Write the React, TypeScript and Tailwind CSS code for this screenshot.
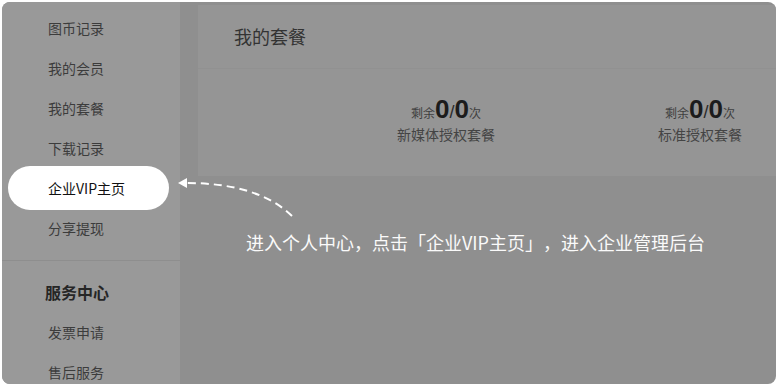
import React from "react";

const font = { fontFamily: '"Noto Sans CJK SC", "Noto Sans", sans-serif' };

function SideItem({ label, active }: { label: string; active?: boolean }) {
  if (active) {
    return (
      <div className="ml-[6px] my-[-2px] flex h-[44px] w-[161px] shrink-0 items-center rounded-full bg-white pl-[40px] text-[14px] text-[#111]">
        {label}
      </div>
    );
  }
  return (
    <div className="flex h-[40px] shrink-0 items-center pl-[46px] text-[14px] text-[#3c3c3c]">{label}</div>
  );
}

function Stat({ name }: { name: string }) {
  const num = { fontFamily: '"Liberation Sans", Arial, sans-serif' };
  return (
    <div className="flex w-[254px] flex-col items-center">
      <div className="flex h-[26px] items-baseline leading-none">
        <span className="text-[12px] text-[#3f3f3f]">剩余</span>
        <span className="text-[26px] font-bold text-[#1c1c1c]" style={num}>0</span>
        <span className="text-[18px] text-[#2a2a2a]" style={num}>/</span>
        <span className="text-[26px] font-bold text-[#1c1c1c]" style={num}>0</span>
        <span className="text-[12px] text-[#3f3f3f]">次</span>
      </div>
      <div className="mt-[2px] text-[14px] leading-[20px] text-[#444]">{name}</div>
    </div>
  );
}

export default function App() {
  return (
    <div className="h-[386px] w-[776px] overflow-hidden bg-white pl-[2px] pt-[2px]" style={font}>
      <div className="relative flex h-[382px] w-[774px] overflow-hidden rounded-[8px] bg-[#8f8f8f]">
        {/* Sidebar */}
        <div className="flex w-[178px] shrink-0 flex-col bg-[#999999] pt-[6px]">
          <SideItem label="图币记录" />
          <SideItem label="我的会员" />
          <SideItem label="我的套餐" />
          <SideItem label="下载记录" />
          <SideItem label="企业VIP主页" active />
          <SideItem label="分享提现" />
          <div className="mt-[12px] h-px shrink-0 bg-[#8e8e8e]" />
          <div className="mt-[11px] flex h-[40px] shrink-0 items-center pl-[43px] text-[16px] font-bold text-[#262626]">
            服务中心
          </div>
          <SideItem label="发票申请" />
          <SideItem label="售后服务" />
        </div>

        {/* Main */}
        <div className="flex min-w-0 flex-1 flex-col pl-[18px] pt-[3px]">
          <div className="h-[171px] w-[700px] shrink-0 bg-[#959595]">
            <div className="flex h-[63px] items-center pl-[36px] text-[18px] text-[#333]">我的套餐</div>
            <div className="h-px bg-[#919191]" />
            <div className="flex pl-[121px] pt-[27px]">
              <Stat name="新媒体授权套餐" />
              <Stat name="标准授权套餐" />
            </div>
          </div>
          <div className="mt-[54px] pl-[48px] text-[18px] leading-[24px] text-[#fafafa] [text-spacing-trim:space-all]">
            进入个人中心，点击「企业VIP主页」，进入企业管理后台
          </div>
        </div>

        {/* Annotation arrow */}
        <svg
          className="pointer-events-none absolute left-0 top-0"
          width="774"
          height="382"
          viewBox="2 2 774 382"
        >
          <path
            d="M292 216 Q258 183 186 183"
            fill="none"
            stroke="#ffffff"
            strokeWidth="2"
            strokeDasharray="8 5"
          />
          <path d="M178 183 L187 178 L187 188 Z" fill="#ffffff" />
        </svg>
      </div>
    </div>
  );
}
